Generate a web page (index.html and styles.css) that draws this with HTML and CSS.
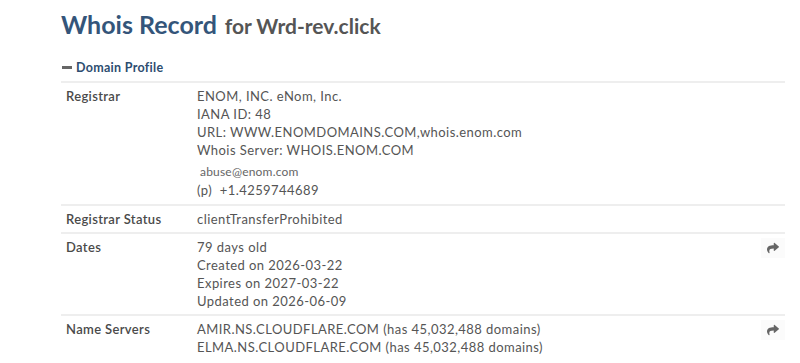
FILE: index.html
```html
<!DOCTYPE html>
<html>
<head>
<meta charset="utf-8">
<link rel="stylesheet" href="styles.css">
</head>
<body>
<div class="page">
  <h1 class="title"><span class="title-main">Whois Record</span> <small class="title-sub">for Wrd-rev.click</small></h1>
  <div class="section-head"><span class="dash"></span>Domain Profile</div>
  <div class="table">
    <div class="row">
      <div class="label">Registrar</div>
      <div class="value">
        <div>ENOM, INC. eNom, Inc.</div>
        <div>IANA ID: 48</div>
        <div>URL: WWW.ENOMDOMAINS.COM,whois.enom.com</div>
        <div>Whois Server: WHOIS.ENOM.COM</div>
        <div class="contact">
          <div class="email">abuse@enom.com</div>
          <div>(p)&nbsp; +1.4259744689</div>
        </div>
      </div>
      <div class="action"></div>
    </div>
    <div class="row">
      <div class="label">Registrar Status</div>
      <div class="value"><div>clientTransferProhibited</div></div>
      <div class="action"></div>
    </div>
    <div class="row">
      <div class="label">Dates</div>
      <div class="value">
        <div>79 days old</div>
        <div>Created on 2026-03-22</div>
        <div>Expires on 2027-03-22</div>
        <div>Updated on 2026-06-09</div>
      </div>
      <div class="action"><span class="share"><svg viewBox="0 0 512 512" width="12" height="12"><path fill="currentColor" d="M503.7 189.8L327.7 37.9C312.3 24.5 288 35.3 288 56v80.1C127.4 137.9 0 170.1 0 322.3c0 61.4 39.6 122.3 83.3 154.1 13.7 9.9 33.1-2.5 28.1-18.6C66 312.3 132.9 274.3 288 272.1V360c0 20.7 24.3 31.5 39.700 18.2l176-152c11.1-9.6 11.1-26.8 0-36.4z"/></svg></span></div>
    </div>
    <div class="row">
      <div class="label">Name Servers</div>
      <div class="value">
        <div>AMIR.NS.CLOUDFLARE.COM (has 45,032,488 domains)</div>
        <div>ELMA.NS.CLOUDFLARE.COM (has 45,032,488 domains)</div>
      </div>
      <div class="action"><span class="share"><svg viewBox="0 0 512 512" width="12" height="12"><path fill="currentColor" d="M503.7 189.8L327.7 37.9C312.3 24.5 288 35.3 288 56v80.1C127.4 137.9 0 170.1 0 322.3c0 61.4 39.6 122.3 83.3 154.1 13.7 9.9 33.1-2.5 28.1-18.6C66 312.3 132.9 274.3 288 272.1V360c0 20.7 24.3 31.5 39.7 18.2l176-152c11.1-9.6 11.1-26.8 0-36.4z"/></svg></span></div>
    </div>
  </div>
</div>
</body>
</html>
```

FILE: styles.css
```css
html, body {
  margin: 0;
  padding: 0;
  background: #ffffff;
}
body {
  font-family: Lato, "Open Sans", "Liberation Sans", sans-serif;
  color: #555555;
}
.page {
  padding: 7px 15px 0 61px;
}
.title {
  margin: 0;
  font-weight: 700;
  line-height: 30px;
  height: 36px;
}
.title-main {
  font-size: 25px;
  color: #34557a;
}
.title-sub {
  font-size: 21px;
  color: #555555;
}
.section-head {
  display: flex;
  align-items: center;
  font-size: 12.5px;
  font-weight: 700;
  color: #2d4d70;
  letter-spacing: 0.3px;
  padding: 17px 0 6px 1px;
  border-bottom: 2px solid #eeeeee;
}
.dash {
  display: inline-block;
  width: 10px;
  height: 3px;
  background: #666666;
  margin-right: 4px;
}
.table {
  display: flex;
  flex-direction: column;
}
.row {
  display: flex;
  border-bottom: 2px solid #eeeeee;
  padding: 4px 0 4px;
  font-size: 13px;
  line-height: 18px;
  letter-spacing: 0.45px;
}
.row:last-child {
  border-bottom: none;
}
.label {
  width: 131px;
  padding-left: 5px;
  color: #4a4a4a;
  font-weight: 600;
  letter-spacing: 0.35px;
}
.value {
  flex: 1;
}
.contact {
  margin-top: 4px;
  margin-bottom: 1px;
}
.email {
  font-size: 12px;
  padding-left: 3px;
  letter-spacing: 0.2px;
  color: #666666;
}
.action {
  width: 24px;
  display: flex;
  justify-content: center;
}
.share {
  display: flex;
  align-items: center;
  justify-content: center;
  width: 24px;
  height: 20px;
  color: #666666;
  background: #fbfbfb;
}
```
